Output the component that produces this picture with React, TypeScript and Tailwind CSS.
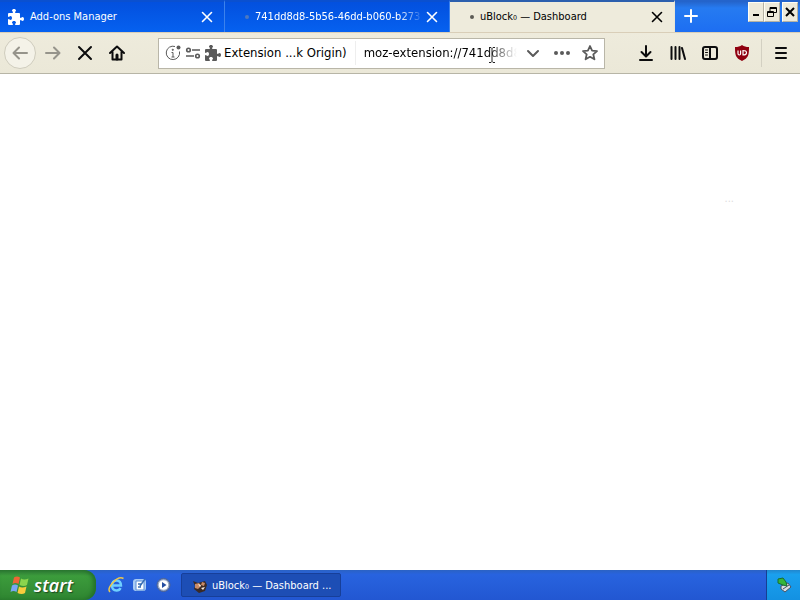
import React from 'react';

const PUZZLE =
  'M14.5 8c-.971 0-1 1-1.75 1a.765.765 0 0 1-.75-.75V5a1 1 0 0 0-1-1H7.75A.765.765 0 0 1 7 3.25c0-.75 1-.779 1-1.75C8 .635 7.1 0 6 0S4 .635 4 1.5c0 .971 1 1 1 1.75a.765.765 0 0 1-.75.75H1a1 1 0 0 0-1 1v2.25A.765.765 0 0 0 .75 8c.75 0 .779-1 1.75-1C3.365 7 4 7.9 4 9s-.635 2-1.5 2c-.971 0-1-1-1.75-1a.765.765 0 0 0-.75.75V15a1 1 0 0 0 1 1h3.25a.765.765 0 0 0 .75-.75c0-.75-1-.779-1-1.75 0-.865.9-1.5 2-1.5s2 .635 2 1.5c0 .971-1 1-1 1.75a.765.765 0 0 0 .75.75H11a1 1 0 0 0 1-1v-3.25a.765.765 0 0 1 .75-.75c.75 0 .779 1 1.75 1 .865 0 1.500-.9 1.500-2s-.635-2-1.500-2z';

function PuzzleIcon() {
  return (
    <svg className="size-4 shrink-0" viewBox="0 0 16 16" fill="currentColor" aria-hidden="true">
      <path d={PUZZLE} />
    </svg>
  );
}

function Stroke({ d, width = 2, children }: { d: string; width?: number; children?: React.ReactNode }) {
  return (
    <svg
      className="size-4 shrink-0"
      viewBox="0 0 16 16"
      fill="none"
      stroke="currentColor"
      strokeWidth={width}
      strokeLinecap="round"
      strokeLinejoin="round"
      aria-hidden="true"
    >
      <path d={d} />
      {children}
    </svg>
  );
}

function Tab({ title, active, loading }: { title: string; active?: boolean; loading?: boolean }) {
  return (
    <div
      role="tab"
      aria-selected={!!active}
      className={
        'flex h-8 min-w-0 flex-[0_1_225px] items-center gap-1.5 border-r border-t-2 pl-2 pr-[9px] ' +
        (active
          ? 'border-r-[#e9e6d6] border-t-[#2c5fae] bg-[#eeebdc] text-black'
          : 'border-r-[#3c82ec] border-t-[#0a50d0] bg-linear-to-b from-[#0350de] to-[#0661f0] text-white')
      }
    >
      {loading ? (
        <span className="flex size-4 shrink-0 items-center justify-end">
          <span className={'size-1 rounded-full ' + (active ? 'bg-[#5c5b55]' : 'bg-[#4d79c0]')} />
        </span>
      ) : (
        <PuzzleIcon />
      )}
      <span
        className={
          'min-w-0 flex-1 whitespace-nowrap ' +
          (loading && !active ? 'mask-r-from-85% mask-r-to-100%' : '')
        }
      >
        {title}
      </span>
      <button type="button" aria-label="Close tab" className="-ml-1.5 flex shrink-0">
        <Stroke d="M3.500 3.500l9 9M12.500 3.500l-9 9" width={1.6} />
      </button>
    </div>
  );
}

function ToolButton({ label, className = '', children }: { label: string; className?: string; children: React.ReactNode }) {
  return (
    <button type="button" aria-label={label} className={'flex size-8 shrink-0 items-center justify-center ' + className}>
      {children}
    </button>
  );
}

function WindowButton({ label, children }: { label: string; children: React.ReactNode }) {
  return (
    <button
      type="button"
      aria-label={label}
      className="flex h-5 w-4 items-center justify-center border border-[#fffef4] border-r-[#b5b2a4] border-b-[#b5b2a4] bg-[#edeadb] text-black"
    >
      {children}
    </button>
  );
}

function TabStrip() {
  return (
    <header className="flex h-8 items-start bg-linear-to-b from-[#2464cb] from-5% via-[#267bf1] via-25% to-[#1d6ef2]">
      <div role="tablist" className="flex min-w-0 flex-[0_1_675px]">
        <Tab title="Add-ons Manager" />
        <Tab title="741dd8d8-5b56-46dd-b060-b273" loading />
        <Tab title="uBlock₀ — Dashboard" active loading />
      </div>
      <button type="button" aria-label="New tab" className="flex h-8 w-8 shrink-0 items-center justify-center text-white">
        <Stroke d="M8 2v12M2 8h12" />
      </button>
      <div className="ml-auto flex shrink-0 pr-0.5 pt-0.5">
        <WindowButton label="Minimize">
          <svg className="size-3" viewBox="0 0 12 12" aria-hidden="true"><path d="M3 8h6v2H3z" /></svg>
        </WindowButton>
        <WindowButton label="Restore">
          <svg className="size-3 shrink-0" viewBox="0 0 12 12" fill="none" stroke="currentColor" aria-hidden="true">
            <path d="M4 5V1.500h6.500v5H8M4 2.500h6.500M1.500 5.500h6v5h-6zM1.500 6.500h6" />
          </svg>
        </WindowButton>
        <span className="w-0.5" />
        <WindowButton label="Close">
          <svg className="size-3 shrink-0" viewBox="0 0 12 12" stroke="currentColor" strokeWidth="2" aria-hidden="true">
            <path d="M2 2l8 8M10 2l-8 8" />
          </svg>
        </WindowButton>
      </div>
    </header>
  );
}

function AddressBar() {
  return (
    <div className="mx-[25px] flex h-[31px] min-w-0 flex-1 items-center border border-[#b9b6a8] bg-white px-1.5 text-[#5a5a5a]">
      <span className="flex shrink-0 items-center gap-1">
        <svg className="size-4" viewBox="0 0 16 16" fill="none" stroke="currentColor" aria-hidden="true">
          <path d="M10 1.500a6.700 6.700 0 1 0 4.500 5" />
          <path d="M8 7.500V12M6.500 7.500H8M6.500 12h3" />
          <circle cx="7.800" cy="4.800" r=".6" fill="currentColor" />
          <circle cx="13.500" cy="2.500" r="2" fill="currentColor" stroke="none" />
        </svg>
        <svg className="size-4" viewBox="0 0 16 16" fill="none" stroke="currentColor" strokeWidth="1.600" aria-hidden="true">
          <circle cx="3.500" cy="5" r="1.800" />
          <path d="M7 5h8M1 11h8" />
          <circle cx="12.500" cy="11" r="1.800" />
        </svg>
        <PuzzleIcon />
      </span>
      <span className="ml-[3px] shrink-0 whitespace-nowrap text-black">Extension ...k Origin)</span>
      <span className="ml-2 h-6 w-px shrink-0 bg-[#eeeeee]" />
      <div className="relative ml-2 min-w-0 flex-1">
        <input
          aria-label="Address"
          defaultValue="moz-extension://741dd8d8-5b56"
          className="block w-full mask-r-from-80% mask-r-to-100% bg-transparent text-black outline-none"
        />
        <svg className="absolute left-[124px] top-1 h-4 w-2" viewBox="0 0 8 16" fill="none" stroke="#222" aria-hidden="true">
          <path d="M1 .5h2l1 1 1-1h2M4 1.500v13M1 15.500h2l1-1 1 1h2" />
        </svg>
      </div>
      <button type="button" aria-label="Show history" className="ml-2 flex shrink-0"><Stroke d="M3 6l5 5 5-5" /></button>
      <button type="button" aria-label="Page actions" className="ml-3 flex shrink-0">
        <svg className="h-4 w-[18px]" viewBox="0 0 18 16" fill="currentColor" aria-hidden="true">
          <circle cx="3" cy="8" r="2" /><circle cx="9" cy="8" r="2" /><circle cx="15" cy="8" r="2" />
        </svg>
      </button>
      <button type="button" aria-label="Bookmark this page" className="ml-[11px] flex shrink-0">
        <Stroke d="M8 1l2.100 4.600 4.900.5-3.700 3.300 1.100 4.900L8 11.800l-4.400 2.500 1.100-4.900L1 6.100l4.900-.5z" width={1.8} />
      </button>
    </div>
  );
}

function NavBar() {
  return (
    <nav className="flex h-[42px] items-center border-b border-[#b7b5a6] border-t border-t-[#d9ceb8] bg-linear-to-b from-[#eeebdc] to-[#ebe8d8] pl-1 pr-[3px] text-[13px] leading-5 text-[#0c0c0d]">
      <ToolButton label="Back" className="mr-px rounded-full border border-[#cfccbd] bg-[#f4f2e8] text-[#96948b]">
        <Stroke d="M15 8H2M7 2.500L1.500 8 7 13.500" />
      </ToolButton>
      <ToolButton label="Forward" className="text-[#96948b]"><Stroke d="M1 8h13M9 2.500L14.500 8 9 13.500" /></ToolButton>
      <ToolButton label="Stop"><Stroke d="M2 2l12 12M14 2L2 14" /></ToolButton>
      <ToolButton label="Home">
        <Stroke d="M1 8l7-6.500L15 8M3.500 7v7.500h9V7">
          <path d="M8 10v4" strokeWidth="3" />
        </Stroke>
      </ToolButton>
      <AddressBar />
      <ToolButton label="Downloads"><Stroke d="M8 1v10M3.500 7L8 11.500 12.500 7M2 15h12" /></ToolButton>
      <ToolButton label="Library"><Stroke d="M1.500 2v12M5.500 2v12M9.500 2v12M12 3l3 11" /></ToolButton>
      <ToolButton label="Sidebars">
        <Stroke d="M3 2h10a2 2 0 0 1 2 2v8a2 2 0 0 1-2 2H3a2 2 0 0 1-2-2V4a2 2 0 0 1 2-2zM8 2v12">
          <path d="M3.500 5h2M3.500 7.500h2M3.500 10h2" strokeWidth="1" />
        </Stroke>
      </ToolButton>
      <ToolButton label="uBlock Origin">
        <svg className="size-4" viewBox="0 0 16 16" fill="none" aria-hidden="true">
          <path d="M8 0c2 1.500 4 2 7 2 0 8-.5 11-7 14C1.500 13 1 10 1 2c3 0 5-.5 7-2z" fill="#900010" />
          <path d="M4 5.500v3q0 1.500 1.300 1.500t1.300-1.500v-3M9 5v5q3.500 0 3.500-2.300T9 5.500" stroke="#fff" strokeWidth="1.200" />
        </svg>
      </ToolButton>
      <span className="mx-[3px] h-7 w-px bg-[#d3d0c2]" />
      <ToolButton label="Open menu"><Stroke d="M3 3h10M3 8h10M3 13h10" /></ToolButton>
    </nav>
  );
}

function Taskbar() {
  return (
    <footer className="flex h-[30px] items-stretch bg-linear-to-b from-[#2b62c4] via-[#2863df] via-15% to-[#2257d2] text-[11px] text-white">
      <button
        type="button"
        className="flex w-24 shrink-0 items-center gap-1 rounded-r-xl bg-linear-to-b from-[#2f7a35] via-[#3c9c3c] via-20% to-[#2f8531] pl-2.5 shadow-[inset_-3px_0_4px_#23702a]"
      >
        <svg className="size-5" viewBox="0 0 20 20" aria-hidden="true">
          <path d="M4 2.500q3-2 6 0L8.500 9q-3-2-6 0z" fill="#ef6535" />
          <path d="M11 3.500q3 2 7.500 0L17 10q-3 2-7.500 0z" fill="#8bd44d" />
          <path d="M2 10.500q3-2 6 0L6.500 17q-3-2-6 0z" fill="#79a7f2" />
          <path d="M9 11.500q3 2 7.500 0L15 18q-3 2-7.500 0z" fill="#f8cc3d" />
        </svg>
        <span className="font-['Open_Sans',sans-serif] text-lg font-semibold italic leading-6 [text-shadow:1px_1px_1px_#1c4a20]">start</span>
      </button>
      <div className="ml-3 flex w-[73px] shrink-0 items-center gap-2">
        <button type="button" aria-label="Internet Explorer">
          <svg className="size-4" viewBox="0 0 16 16" fill="none" aria-hidden="true">
            <path d="M4 8.500h9q0-5-4.500-5T4 8.500q0 5 4.500 5 3 0 4-2.500" stroke="#6fd0ff" strokeWidth="2.400" />
            <path d="M2 15Q-1 12 5 5.500T15.500 1.500" stroke="#edc84c" strokeWidth="1.500" />
          </svg>
        </button>
        <button type="button" aria-label="Show desktop">
          <svg className="size-4" viewBox="0 0 16 16" fill="none" aria-hidden="true">
            <rect x="1" y="2" width="13" height="12" rx="3" fill="#a9cbf3" />
            <path d="M4 4h8v9H4z" fill="#fff" stroke="#5b8fd6" />
            <path d="M6 7h4M6 10h3M8 9l5-7" stroke="#376eb5" strokeWidth="1.500" />
          </svg>
        </button>
        <button type="button" aria-label="Media Player">
          <svg className="size-4" viewBox="0 0 16 16" aria-hidden="true">
            <circle cx="7.500" cy="8" r="6.500" fill="#93a6c8" stroke="#4d6291" />
            <circle cx="7.500" cy="8" r="4.800" fill="#fff" />
            <path d="M6 5l4.500 3L6 11z" fill="#234da0" />
          </svg>
        </button>
      </div>
      <button
        type="button"
        className="my-[3px] flex min-w-0 flex-[0_1_160px] items-center gap-1 rounded-xs border border-[#173f99] bg-[#1d4eb5] pl-2.5 pt-0.5"
      >
        <svg className="size-4 shrink-0" viewBox="0 0 16 16" aria-hidden="true">
          <path d="M1 3l5 2 7-2 2 4-2 6-6 2-5-4 1-3z" fill="#3b2a25" />
          <path d="M3 6l4-1 2 3-3 3-3-1zM10 4l3 1-1 3-3-1z" fill="#c98b67" />
          <path d="M6 6l3 1-1 2zM9 10l4-1-2 3z" fill="#f4e9df" />
        </svg>
        <span className="whitespace-nowrap">uBlock₀ — Dashboard ...</span>
      </button>
      <div className="ml-auto flex w-[34px] shrink-0 items-center justify-center border-l border-[#173f92] bg-linear-to-b from-[#2187ce] via-[#1aa0ee] via-15% to-[#1391e2]">
        <svg className="size-4" viewBox="0 0 16 16" aria-hidden="true">
          <path d="M5 9l7-3 3 4-6 5-4-3z" fill="#d9dde2" stroke="#485464" />
          <path d="M7 12l6-4" stroke="#485464" />
          <path d="M2 2l5-1 3 4 1 4-4-1-5-2z" fill="#35b63a" stroke="#1a6c30" />
        </svg>
      </div>
    </footer>
  );
}

export default function App() {
  return (
    <div className="flex h-screen flex-col overflow-hidden bg-white font-['DejaVu_Sans_Condensed','DejaVu_Sans',sans-serif] text-[11px] leading-4">
      <TabStrip />
      <NavBar />
      <main className="flex flex-1 justify-end bg-white pr-[66px] pt-[117px]">
        <span className="text-[#dddddd]">...</span>
      </main>
      <Taskbar />
    </div>
  );
}
